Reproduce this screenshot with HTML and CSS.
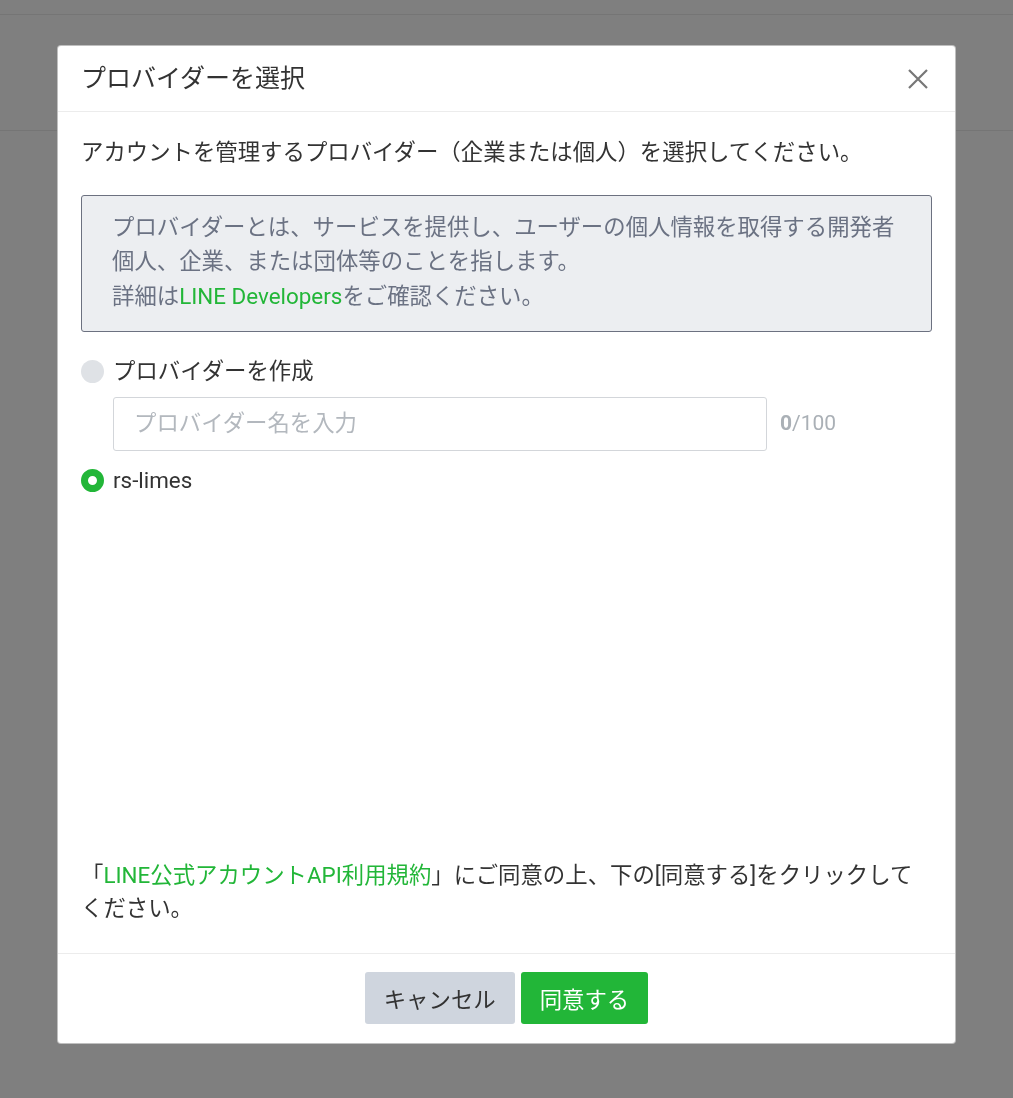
FILE: index.html
```html
<!DOCTYPE html>
<html lang="ja">
<head>
<meta charset="utf-8">
<title>プロバイダーを選択</title>
<link rel="stylesheet" href="styles.css">
</head>
<body>
<div class="page">
  <div class="page-topbar"></div>
  <div class="page-header"></div>
</div>
<div class="overlay">
  <div class="modal">
    <div class="modal-header">
      <h2 class="modal-title">プロバイダーを選択</h2>
      <button class="close-btn" aria-label="閉じる">
        <svg width="20" height="20" viewBox="0 0 20 20"><path d="M1 1L19 19M19 1L1 19" stroke="#777" stroke-width="2.2" fill="none"/></svg>
      </button>
    </div>
    <div class="modal-body">
      <p class="lead">アカウントを管理するプロバイダー（企業または個人）を選択してください。</p>
      <div class="info-box">
        <div class="info-line">プロバイダーとは、サービスを提供し、ユーザーの個人情報を取得する開発者</div>
        <div class="info-line">個人、企業、または団体等のことを指します。</div>
        <div class="info-line">詳細は<a class="link">LINE Developers</a>をご確認ください。</div>
      </div>
      <div class="radio-row">
        <span class="radio"></span>
        <span class="radio-label">プロバイダーを作成</span>
      </div>
      <div class="input-row">
        <div class="text-input">プロバイダー名を入力</div>
        <span class="counter"><b>0</b>/100</span>
      </div>
      <div class="radio-row selected-row">
        <span class="radio checked"></span>
        <span class="radio-label latin">rs-limes</span>
      </div>
      <p class="terms">「<a class="link">LINE公式アカウントAPI利用規約</a>」にご同意の上、下の[同意する]をクリックして<br>ください。</p>
    </div>
    <div class="modal-footer">
      <button class="btn btn-cancel">キャンセル</button>
      <button class="btn btn-primary">同意する</button>
    </div>
  </div>
</div>
</body>
</html>
```

FILE: styles.css
```css
* { box-sizing: border-box; }
html, body { margin: 0; padding: 0; }
body {
  font-family: Roboto, "Noto Sans CJK JP", sans-serif;
  background: #fff;
  width: 1013px;
  height: 1098px;
  overflow: hidden;
}
.page { height: 1098px; }
.page-topbar { height: 15px; border-bottom: 1px solid #eaeaea; }
.page-header { height: 116px; border-bottom: 1px solid #eaeaea; }

.overlay {
  position: fixed;
  inset: 0;
  background: rgba(0, 0, 0, 0.5);
  display: flex;
  justify-content: center;
  align-items: flex-start;
  padding-top: 45px;
}
.modal {
  width: 899px;
  background: #fff;
  border: 1px solid rgba(0, 0, 0, 0.25);
  border-radius: 4px;
  display: flex;
  flex-direction: column;
  color: #333;
}
.modal-header {
  height: 66px;
  display: flex;
  align-items: center;
  justify-content: space-between;
  padding: 0 27px 0 23px;
  border-bottom: 1px solid #ececec;
}
.modal-title {
  margin: 0;
  font-size: 25px;
  font-weight: 400;
  color: #333;
  line-height: 1;
}
.close-btn {
  background: none;
  border: 0;
  padding: 0;
  width: 20px;
  height: 20px;
  display: flex;
}
.modal-body {
  height: 841px;
  display: flex;
  flex-direction: column;
  padding: 24px 23px 28px 23px;
  font-size: 22.4px;
  line-height: 33.6px;
}
.lead { margin: 0; color: #333; }
.info-box {
  margin-top: 25px;
  background: #eceef1;
  border: 1px solid #6c7180;
  border-radius: 3px;
  padding: 14px 20px 18px 30px;
  line-height: 34.5px;
  color: #6b7283;
}
.info-line { white-space: nowrap; }
.link { color: #22b638; text-decoration: none; }
.radio-row {
  display: flex;
  align-items: center;
  gap: 9px;
  margin-top: 23px;
}
.radio {
  width: 23px;
  height: 23px;
  border-radius: 50%;
  background: #dfe2e6;
  flex: none;
}
.radio.checked {
  background: #fff;
  border: 7px solid #22b638;
}
.radio-label { color: #333; }
.latin { font-family: Roboto, sans-serif; }
.input-row {
  display: flex;
  align-items: center;
  margin: 8px 0 0 32px;
  gap: 13px;
}
.text-input {
  width: 654px;
  height: 54px;
  border: 1px solid #d3d6da;
  border-radius: 3px;
  padding: 0 20px;
  display: flex;
  align-items: center;
  color: #b3b8be;
}
.counter {
  color: #aab0b6;
  font-family: Roboto, sans-serif;
  font-size: 21px;
}
.counter b { font-weight: 700; }
.selected-row { margin-top: 13px; }
.terms {
  margin: auto 0 0 0;
  color: #333;
  line-height: 33px;
}
.modal-footer {
  border-top: 1px solid #ececec;
  display: flex;
  justify-content: center;
  gap: 6px;
  padding: 18px 0 19px;
}
.btn {
  height: 52px;
  padding: 0 19px;
  border: 0;
  border-radius: 3px;
  font-family: Roboto, "Noto Sans CJK JP", sans-serif;
  font-size: 22.4px;
}
.btn-cancel { background: #cfd5de; color: #333; }
.btn-primary { background: #22b638; color: #fff; }
```
